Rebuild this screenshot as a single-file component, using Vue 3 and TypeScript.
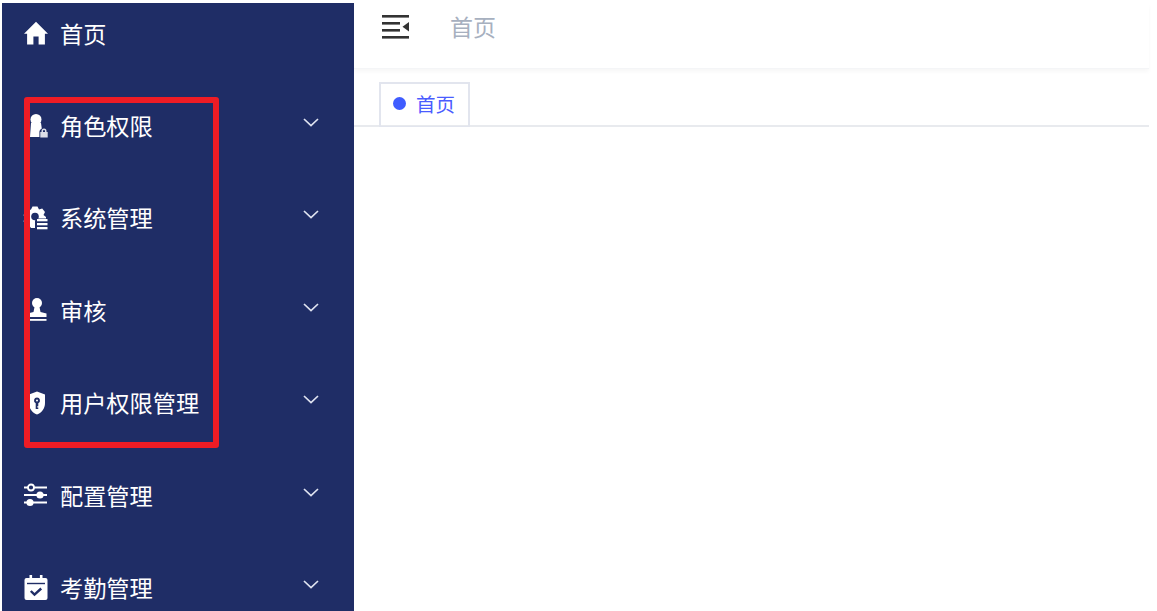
<script setup lang="ts">
interface MenuItem {
  label: string;
  icon: string;
  arrow: boolean;
}

const menu: MenuItem[] = [
  { label: '首页', icon: 'home', arrow: false },
  { label: '角色权限', icon: 'role', arrow: true },
  { label: '系统管理', icon: 'system', arrow: true },
  { label: '审核', icon: 'stamp', arrow: true },
  { label: '用户权限管理', icon: 'shield', arrow: true },
  { label: '配置管理', icon: 'sliders', arrow: true },
  { label: '考勤管理', icon: 'calendar', arrow: true },
];
</script>

<template>
  <div class="layout">
    <aside class="sidebar">
      <ul class="menu">
        <li v-for="item in menu" :key="item.label" class="menu-item">
          <svg class="menu-icon" viewBox="0 0 24 24" fill="#fff">
            <path v-if="item.icon === 'home'" d="M9.4 23.5v-8h5.2v8h6.3V12.8H24L12 .8 0 12.8h3.1v10.7z" />
            <g v-else-if="item.icon === 'role'">
              <circle cx="12" cy="5.5" r="5.5" />
              <path d="M7 9h10l.8 5.5c-1.500.7-2.400 2-2.400 3.500v5H6z" />
              <path fill-rule="evenodd" opacity=".85" d="M20 14.500a2.500 2.500 0 0 1 2.500 2.500v1h1.200v5.500h-7.400V18h1.200v-1a2.500 2.500 0 0 1 2.500-2.500zm0 1.500a1 1 0 0 0-1 1v1h2v-1a1 1 0 0 0-1-1z" />
            </g>
            <g v-else-if="item.icon === 'system'">
              <path d="M7 3.500 8.500.5h5L15 3.500l3.200-1 2.800 3.500-1.500 3 2.500 2v1.500H14a3 3 0 0 0-3 3v6.500H7L5.500 20 1.500 19-.5 15l2-2.500L-.5 9l2.500-3.500z" />
              <circle cx="11" cy="10.500" r="3.800" fill="#1f2d66" />
              <rect x="13" y="13" width="10.500" height="2.300" />
              <rect x="13" y="17" width="10.500" height="2.300" />
              <rect x="13" y="21" width="10.500" height="2.300" />
            </g>
            <g v-else-if="item.icon === 'stamp'">
              <circle cx="13" cy="5" r="5" />
              <path d="M10.500 9h5l1 5 6 1.500v3.500H3.500v-3.500l6-1.500z" />
              <rect x="3.500" y="21" width="19" height="1.800" />
            </g>
            <path v-else-if="item.icon === 'shield'" fill-rule="evenodd" d="M13 .5 21 3.500V12c0 5.500-3 9.500-8 11.500C8 21.500 5 17.500 5 12V3.500zM13 6.500a3 3 0 0 0-1.300 5.700V18h2.600v-1.500h-1v-1.300h1v-3A3 3 0 0 0 13 6.500zm0 2a1 1 0 1 1 0 2 1 1 0 0 1 0-2z" />
            <g v-else-if="item.icon === 'sliders'">
              <rect x="0" y="3.500" width="23" height="2" />
              <rect x="0" y="11" width="23" height="2" />
              <rect x="0" y="18.500" width="23" height="2" />
              <circle cx="7" cy="4.500" r="3" fill="#1f2d66" stroke="#fff" stroke-width="1.800" />
              <circle cx="16" cy="12" r="3.600" />
              <circle cx="6" cy="19.500" r="3.600" />
            </g>
            <g v-else>
              <rect x="5.500" y="-1" width="2.600" height="5" />
              <rect x="15.900" y="-1" width="2.600" height="5" />
              <rect x="0.500" y="2" width="23" height="22" rx="2" />
              <rect x="3" y="6.800" width="18" height="1.400" fill="#1f2d66" />
              <path d="M6.800 15l3.700 3.700 6.700-6.200" fill="none" stroke="#1f2d66" stroke-width="2.400" />
            </g>
          </svg>
          <span class="menu-label">{{ item.label }}</span>
          <svg v-if="item.arrow" class="menu-arrow" viewBox="0 0 16 9" fill="none">
            <path d="M1 1l7 6.500L15 1" stroke="#dfe3f0" stroke-width="1.700" />
          </svg>
        </li>
      </ul>
    </aside>

    <main class="main">
      <header class="topbar">
        <svg class="fold" viewBox="0 0 27 24" fill="#333">
          <rect x="0" y="0" width="27" height="2.600" />
          <rect x="0" y="7" width="18" height="2.600" />
          <rect x="0" y="14" width="18" height="2.600" />
          <rect x="0" y="21" width="27" height="2.600" />
          <path d="M27 7v9.500L20.500 11.800z" />
        </svg>
        <span class="crumb">首页</span>
      </header>
      <nav class="tabs">
        <div class="tab">
          <i class="tab-dot"></i>
          <span>首页</span>
        </div>
      </nav>
    </main>

    <div class="annotation"></div>
  </div>
</template>

<style scoped>
.layout {
  position: relative;
  display: flex;
  height: 611px;
  padding: 3px 8px 0 2px;
  box-sizing: border-box;
  overflow: hidden;
  font-family: "Noto Sans CJK SC", "Liberation Sans", sans-serif;
}
.sidebar {
  flex: 0 0 352px;
  background: #1f2d66;
  overflow: hidden;
}
.menu {
  list-style: none;
  margin: -16px 0 0;
  padding: 0;
}
.menu-item {
  display: flex;
  align-items: center;
  height: 92.4px;
  padding-left: 22px;
  color: #fff;
  font-size: 23.2px;
}
.menu-icon {
  flex: none;
  width: 24px;
  height: 24px;
  margin-right: 12px;
  overflow: visible;
}
.menu-label {
  flex: 1;
  line-height: 1;
  white-space: nowrap;
}
.menu-arrow {
  flex: none;
  width: 16px;
  height: 9px;
  margin: -6px 35px 0 0;
}
.main {
  flex: 1;
  display: flex;
  flex-direction: column;
}
.topbar {
  display: flex;
  align-items: center;
  height: 66px;
  padding: 0 0 18px 28px;
  box-sizing: border-box;
  border-bottom: 1px solid #f4f5f7;
  box-shadow: 0 3px 4px rgba(0, 21, 41, 0.03);
}
.fold {
  width: 27px;
  height: 24px;
}
.crumb {
  margin-left: 41px;
  font-size: 23px;
  line-height: 1;
  color: #a7b0bf;
}
.tabs {
  display: flex;
  height: 58px;
  padding: 13px 0 0 25px;
  box-sizing: border-box;
  border-bottom: 2px solid #e8eaee;
}
.tab {
  display: flex;
  align-items: center;
  width: 91px;
  height: 45px;
  padding: 0 0 3px 12px;
  box-sizing: border-box;
  border: 2px solid #e2e5ee;
  border-bottom-width: 1px;
  color: #4a5cff;
  font-size: 19.5px;
}
.tab-dot {
  width: 13px;
  height: 13px;
  margin-right: 10px;
  border-radius: 50%;
  background: #3f5cff;
}
.annotation {
  position: absolute;
  left: 24px;
  top: 97px;
  width: 195px;
  height: 351px;
  box-sizing: border-box;
  border: 6px solid #ee1c25;
  border-radius: 3px;
}
</style>
